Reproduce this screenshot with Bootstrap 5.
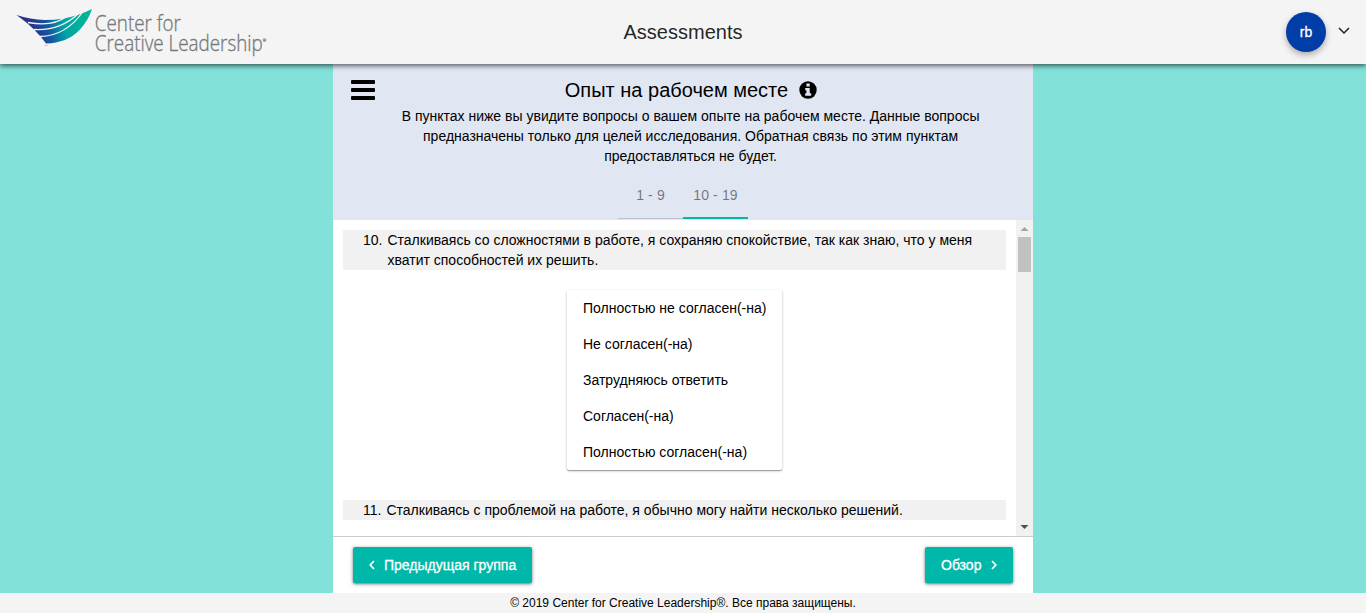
<!DOCTYPE html>
<html lang="ru">
<head>
<meta charset="utf-8">
<meta name="viewport" content="width=device-width, initial-scale=1">
<title>Assessments</title>
<link href="https://cdn.jsdelivr.net/npm/bootstrap@5.3.0/dist/css/bootstrap.min.css" rel="stylesheet">
<style>
body{font:14px/20px "Liberation Sans",Arial,sans-serif;color:#000;background:#82e2da;height:100vh}
.topbar{height:64px;background:#f4f4f4;box-shadow:0 0 4px rgba(0,0,0,.14),0 2px 5px rgba(0,0,0,.55);z-index:2;padding:0 12px 0 16px}
.brand-mark{width:262px;height:50px}
.app-title{font-size:20px;color:rgba(0,0,0,.87)}
.avatar{width:40px;height:40px;background:#003da6;box-shadow:0 3px 6px rgba(0,0,0,.3)}
.avatar span{-webkit-text-stroke:.3px #fff}
.panel{width:700px}
.panel-head{height:156px;background:#e0e7f3}
.burger{left:18px;top:16px;width:24px;height:20px}
.group-title{font-size:20px;line-height:24px;gap:11px;margin:14px 0 0 16px}
.intro{width:600px;margin:4px 0 0 57.6px}
.tabs-row{margin-top:5px;height:48px;margin-right:1px}
.group-tab{width:65px;font-size:14px;letter-spacing:.14px;color:rgba(0,0,0,.5);border-bottom:1px solid #bcc3d3;padding:14px 0 0 1px}
.group-tab.active{border-bottom:2px solid #00b8a9}
.questions{padding:10px 10px 0}
.question{background:#f1f1f1;padding-left:20px;gap:5px}
.answers{width:215px;margin:20px 0 30px 224px;border-radius:2px;box-shadow:0 1px 3px rgba(0,0,0,.2),0 1px 1px rgba(0,0,0,.3)}
.answer{height:36px;padding:8px 16px;white-space:nowrap}
.scroll-track{width:17px;background:#f1f1f1}
.scroll-thumb{width:13px;height:35px;background:#c1c1c1}
.panel-foot{height:57px;border-top:1px solid #ccc;padding:0 20px}
.btn-nav{height:36px;border:0;border-radius:2px;background:#00b8a9;color:#fff;font-size:14px;line-height:20px;-webkit-text-stroke:.3px #fff;gap:9px;padding:0 16px;box-shadow:0 1px 4px rgba(0,0,0,.35),0 1px 2px rgba(0,0,0,.3)}
.btn-prev{width:179px}
.btn-next{width:88px;gap:10px}
.site-foot{height:20px;background:#f4f4f4;font-size:12px}
</style>
</head>
<body class="d-flex flex-column overflow-hidden">
<header class="topbar d-flex align-items-center justify-content-between position-relative flex-shrink-0">
  <svg class="brand-mark" viewBox="16 7 262 50">
    <defs><linearGradient id="wing" gradientUnits="userSpaceOnUse" x1="34" y1="34" x2="82" y2="22"><stop stop-color="#29328d"/><stop offset=".3" stop-color="#1555a0"/><stop offset=".62" stop-color="#00a3a5"/><stop offset="1" stop-color="#00b398"/></linearGradient></defs>
    <path fill="url(#wing)" d="M16.500 15Q30 19.500 45 20Q54 20 64 18.500Q79 15.500 92 9Q88 21 79.500 30Q67 43 46 43.500L41 37L34 29.500L27 23Z"/>
    <path fill="none" stroke="#f4f4f4" stroke-width="1.300" d="M28 22.500Q53 27 66.500 16.500M34 29.500Q60 31 78.500 13.500M40 36.500Q66 36 83 11.500"/>
    <text x="44.500" y="46.200" font-family="Liberation Sans" font-size="2.500" fill="#777">TM</text>
    <g font-family="Open Sans,sans-serif" font-weight="300" fill="#757b7d" stroke="#757b7d" stroke-width=".35">
      <text x="94.800" y="30.600" font-size="21.500" textLength="86" lengthAdjust="spacingAndGlyphs">Center for</text>
      <text x="94.800" y="50.500" font-size="21.500" textLength="168" lengthAdjust="spacingAndGlyphs">Creative Leadership</text>
      <text x="262.800" y="41.500" font-size="4">®</text>
    </g>
  </svg>
  <h1 class="app-title position-absolute start-50 translate-middle-x m-0 fw-normal">Assessments</h1>
  <div class="d-flex align-items-center gap-2">
    <div class="avatar rounded-circle text-white d-flex align-items-center justify-content-center"><span>rb</span></div>
    <svg width="20" height="20" viewBox="0 0 20 20"><path d="M5 6l5 5 5-5" fill="none" stroke="#222" stroke-width="1.500"/></svg>
  </div>
</header>
<main class="panel mx-auto bg-white d-flex flex-column flex-grow-1 overflow-hidden">
  <section class="panel-head position-relative overflow-hidden text-center flex-shrink-0">
    <svg class="burger position-absolute" viewBox="0 0 24 20"><path d="M1 0H23Q24 0 24 1V3Q24 4 23 4H1Q0 4 0 3V1Q0 0 1 0ZM1 8H23Q24 8 24 9V11Q24 12 23 12H1Q0 12 0 11V9Q0 8 1 8ZM1 16H23Q24 16 24 17V19Q24 20 23 20H1Q0 20 0 19V17Q0 16 1 16Z"/></svg>
    <div class="group-title d-flex justify-content-center align-items-center"><span>Опыт на рабочем месте</span>
      <svg width="18" height="18" viewBox="0 0 18 18"><circle cx="9" cy="9" r="8.700"/><path fill="#e0e7f3" d="M7.400 2.500h3.300v3H7.400zM6.200 7h4.500v5.300h1.500v2.500H6.200v-2.500h1.200V9.300H6.200z"/></svg>
    </div>
    <p class="intro mb-0">В пунктах ниже вы увидите вопросы о вашем опыте на рабочем месте. Данные вопросы<br>предназначены только для целей исследования. Обратная связь по этим пунктам<br>предоставляться не будет.</p>
    <nav class="tabs-row d-flex justify-content-center"><div class="group-tab">1 - 9</div><div class="group-tab active">10 - 19</div></nav>
  </section>
  <section class="d-flex flex-grow-1 overflow-hidden">
    <div class="questions flex-grow-1">
      <div class="question d-flex"><span>10.</span><span>Сталкиваясь со сложностями в работе, я сохраняю спокойствие, так как знаю, что у меня<br>хватит способностей их решить.</span></div>
      <div class="answers bg-white">
        <div class="answer">Полностью не согласен(-на)</div>
        <div class="answer">Не согласен(-на)</div>
        <div class="answer">Затрудняюсь ответить</div>
        <div class="answer">Согласен(-на)</div>
        <div class="answer">Полностью согласен(-на)</div>
      </div>
      <div class="question d-flex"><span>11.</span><span>Сталкиваясь с проблемой на работе, я обычно могу найти несколько решений.</span></div>
    </div>
    <div class="scroll-track d-flex flex-column align-items-center flex-shrink-0">
      <svg width="17" height="17" viewBox="0 0 17 17"><path fill="#a3a3a3" d="M4.500 11L8.500 7l4 4z"/></svg>
      <div class="scroll-thumb"></div>
      <svg class="mt-auto" width="17" height="17" viewBox="0 0 17 17"><path fill="#505050" d="M4.500 6l4 4 4-4z"/></svg>
    </div>
  </section>
  <footer class="panel-foot d-flex justify-content-between align-items-center flex-shrink-0">
    <button class="btn btn-nav btn-prev text-nowrap d-flex align-items-center"><svg class="flex-shrink-0" width="6" height="10" viewBox="0 0 6 10"><path d="M5 1L1.200 5 5 9" fill="none" stroke="#fff" stroke-width="1.700"/></svg><span>Предыдущая группа</span></button>
    <button class="btn btn-nav btn-next text-nowrap d-flex align-items-center"><span>Обзор</span><svg class="flex-shrink-0" width="6" height="10" viewBox="0 0 6 10"><path d="M1 1l3.800 4L1 9" fill="none" stroke="#fff" stroke-width="1.700"/></svg></button>
  </footer>
</main>
<footer class="site-foot text-center flex-shrink-0">© 2019 Center for Creative Leadership®. Все права защищены.</footer>
<script src="https://cdn.jsdelivr.net/npm/bootstrap@5.3.0/dist/js/bootstrap.bundle.min.js"></script>
</body>
</html>
